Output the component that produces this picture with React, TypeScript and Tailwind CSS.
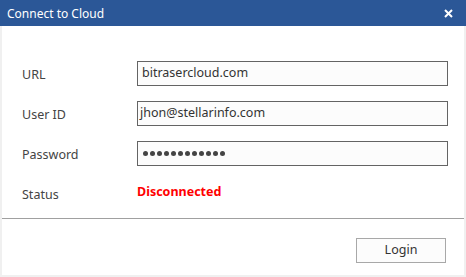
import React from "react";

const font = { fontFamily: '"Noto Sans", "Open Sans", sans-serif' };

function Field({ label, children }: { label: string; children: React.ReactNode }) {
  return (
    <div className="flex items-center h-[25px]">
      <div className="w-[135px] pl-[20px] pt-[3px] text-[12.5px] text-[#444]">{label}</div>
      {children}
    </div>
  );
}

export default function App() {
  return (
    <div className="w-[466px] h-[277px] bg-[#f0f0f0] flex flex-col" style={font}>
      <div className="h-[26px] bg-[#2b5797] flex items-center justify-between pl-[7px] pr-[13px] shrink-0">
        <span className="text-white text-[12px] leading-none pt-px">Connect to Cloud</span>
        <svg width="9" height="9" viewBox="0 0 9 9">
          <path d="M1 1 L8 8 M8 1 L1 8" stroke="white" strokeWidth="2" />
        </svg>
      </div>
      <div className="mx-[2px] h-[249px] bg-white flex flex-col">
        <div className="pt-[35px] flex flex-col gap-[15px]">
          <Field label="URL">
            <div className="w-[311px] h-[25px] border border-[#646464] bg-[#fcfcfc] flex items-center pl-[4px] text-[12.5px] text-[#333]">
              bitrasercloud.com
            </div>
          </Field>
          <Field label="User ID">
            <div className="w-[311px] h-[25px] border border-[#646464] bg-[#fcfcfc] flex items-center pl-[2px] text-[12.5px] text-[#333]">
              jhon@stellarinfo.com
            </div>
          </Field>
          <Field label="Password">
            <div className="w-[311px] h-[25px] border border-[#646464] bg-[#fcfcfc] flex items-center pl-[5px] gap-[2px]">
              {Array.from({ length: 12 }).map((_, i) => (
                <span key={i} className="w-[5px] h-[5px] rounded-full bg-[#444]" />
              ))}
            </div>
          </Field>
          <Field label="Status">
            <span className="text-[12.5px] font-bold text-[#ff0000] -mt-[2px]">Disconnected</span>
          </Field>
        </div>
        <div className="mt-[12px] h-px bg-[#a0a0a0]" />
        <div className="flex justify-end pr-[18px] pt-[19px]">
          <button className="w-[90px] h-[25px] border border-[#a8a8a8] bg-[#fcfcfc] text-[12.5px] text-[#333]">
            Login
          </button>
        </div>
      </div>
    </div>
  );
}
